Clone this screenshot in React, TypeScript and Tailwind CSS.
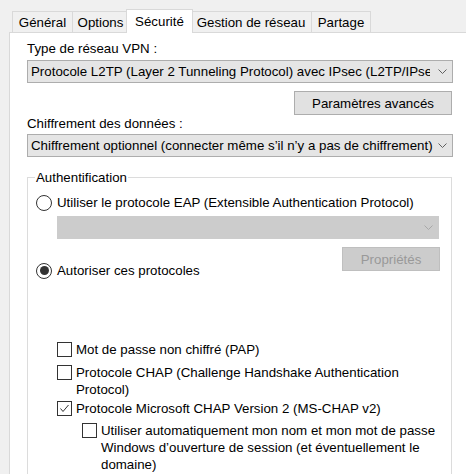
import React from "react";

function Chevron({ color = "#606060" }: { color?: string }) {
  return (
    <svg width="9" height="5" viewBox="0 0 9 5" className="shrink-0">
      <polyline points="0.5,0.5 4.5,4.5 8.5,0.5" fill="none" stroke={color} strokeWidth="1" />
    </svg>
  );
}

function CheckBox({ checked = false }: { checked?: boolean }) {
  return (
    <div className="w-[15px] h-[15px] shrink-0 border border-[#333333] bg-white flex items-center justify-center">
      {checked && (
        <svg width="13" height="13" viewBox="0 0 13 13">
          <polyline points="2.5,6.5 5,9.5 10.5,3" fill="none" stroke="#333333" strokeWidth="1" />
        </svg>
      )}
    </div>
  );
}

function Radio({ checked = false }: { checked?: boolean }) {
  return (
    <div className="w-[16px] h-[16px] shrink-0 rounded-full border border-[#333333] bg-white flex items-center justify-center">
      {checked && <div className="w-[9px] h-[9px] rounded-full bg-[#333333]" />}
    </div>
  );
}

export default function App() {
  return (
    <div className="w-[466px] h-[474px] bg-[#f0f0f0] overflow-hidden flex flex-col text-[13.3px] leading-[17px] text-black font-['Liberation_Sans',Arial,sans-serif]">
      {/* Tabs */}
      <div className="flex items-end h-[32px] pl-[12px] shrink-0">
        <div className="h-[21px] w-[61px] border border-b-0 border-[#d9d9d9] bg-[#f0f0f0] flex items-center justify-center">
          Général
        </div>
        <div className="-ml-px h-[21px] w-[57px] border border-b-0 border-[#d9d9d9] bg-[#f0f0f0] flex items-center justify-center">
          Options
        </div>
        <div className="relative z-10 -ml-[3px] -mr-[3px] -mb-px h-[24px] w-[67px] border border-b-0 border-[#d9d9d9] bg-white flex items-center justify-center pb-[1px]">
          Sécurité
        </div>
        <div className="h-[21px] w-[122px] border border-b-0 border-[#d9d9d9] bg-[#f0f0f0] flex items-center justify-center">
          Gestion de réseau
        </div>
        <div className="-ml-px h-[21px] w-[60px] border border-b-0 border-[#d9d9d9] bg-[#f0f0f0] flex items-center justify-center">
          Partage
        </div>
      </div>

      {/* Page */}
      <div className="ml-[9px] flex-1 bg-white border-l border-t border-[#d9d9d9] pl-[17px] flex flex-col">
        <div className="mt-[7px]">Type de réseau VPN :</div>
        <div className="mt-[3px] w-[426px] h-[23px] border border-[#adadad] bg-[#e5e5e5] flex items-center pl-[3px] pr-[5px]">
          <span className="flex-1 overflow-hidden whitespace-nowrap">
            Protocole L2TP (Layer 2 Tunneling Protocol) avec IPsec (L2TP/IPsec)
          </span>
          <span className="w-[8px]" />
          <Chevron />
        </div>
        <div className="mt-[8px] w-[425px] flex justify-end">
          <div className="w-[158px] h-[24px] border border-[#adadad] bg-[#e1e1e1] flex items-center justify-center">
            Paramètres avancés
          </div>
        </div>
        <div className="mt-0">Chiffrement des données :</div>
        <div className="mt-[2px] w-[426px] h-[23px] border border-[#adadad] bg-[#e5e5e5] flex items-center pl-[3px] pr-[5px]">
          <span className="flex-1 overflow-hidden whitespace-nowrap">
            Chiffrement optionnel (connecter même s’il n’y a pas de chiffrement)
          </span>
          <Chevron />
        </div>

        <fieldset className="mt-[12px] w-[425px] h-[320px] border border-[#dcdcdc] flex flex-col">
          <legend className="ml-[7px] px-[1px]">Authentification</legend>
          <div className="pl-[8px] flex flex-col">
            <div className="mt-[8px] flex items-center gap-[5px] h-[17px]">
              <Radio />
              <span className="whitespace-nowrap">Utiliser le protocole EAP (Extensible Authentication Protocol)</span>
            </div>
            <div className="mt-[5px] ml-[21px] w-[382px] h-[23px] border border-[#cccccc] bg-[#cccccc] flex items-center justify-end pr-[5px]">
              <Chevron color="#a8a8a8" />
            </div>
            <div className="mt-[8px] flex items-start justify-between w-[404px]">
              <div className="mt-[15px] flex items-center gap-[5px] h-[17px]">
                <Radio checked />
                <span className="whitespace-nowrap">Autoriser ces protocoles</span>
              </div>
              <div className="w-[98px] h-[24px] border border-[#bfbfbf] bg-[#cccccc] text-[#999999] flex items-center justify-center">
                Propriétés
              </div>
            </div>

            <div className="mt-[62px] ml-[21px] flex items-center gap-[4px] h-[17px]">
              <CheckBox />
              <span className="whitespace-nowrap">Mot de passe non chiffré (PAP)</span>
            </div>
            <div className="mt-[6px] ml-[21px] flex items-start gap-[4px]">
              <div className="mt-[1px]">
                <CheckBox />
              </div>
              <span className="whitespace-nowrap">
                Protocole CHAP (Challenge Handshake Authentication
                <br />
                Protocol)
              </span>
            </div>
            <div className="mt-[2px] ml-[21px] flex items-start gap-[4px]">
              <div className="mt-[1px]">
                <CheckBox checked />
              </div>
              <span className="whitespace-nowrap">Protocole Microsoft CHAP Version 2 (MS-CHAP v2)</span>
            </div>
            <div className="mt-[5px] ml-[46px] flex items-start gap-[4px]">
              <div className="mt-[1px]">
                <CheckBox />
              </div>
              <span className="whitespace-nowrap">
                Utiliser automatiquement mon nom et mon mot de passe
                <br />
                Windows d’ouverture de session (et éventuellement le
                <br />
                domaine)
              </span>
            </div>
          </div>
        </fieldset>
      </div>
    </div>
  );
}
